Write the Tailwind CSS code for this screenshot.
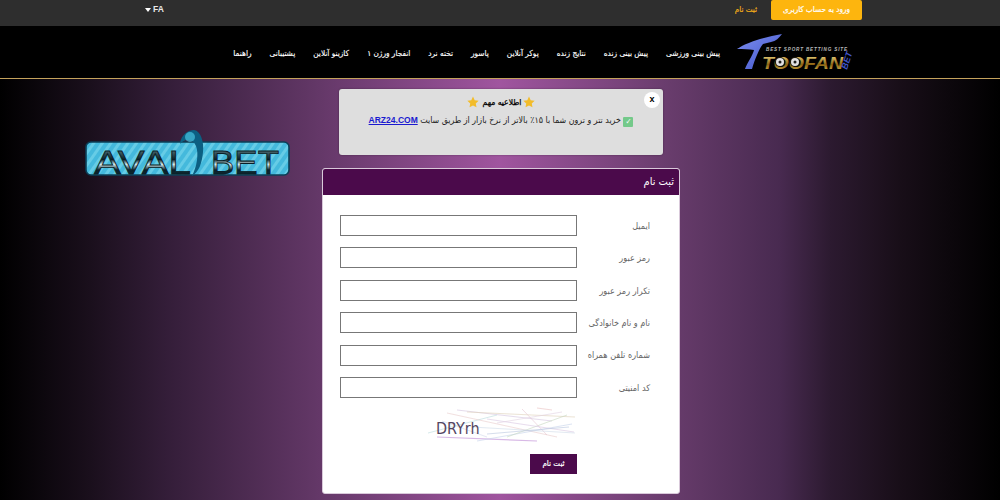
<!doctype html>
<html lang="fa" dir="rtl">
<head>
<meta charset="utf-8">
<script src="https://cdn.jsdelivr.net/npm/@tailwindcss/browser@4"></script>
</head>
<body class="m-0 h-[500px] w-[1000px] overflow-hidden bg-black font-['DejaVu_Sans_Condensed','DejaVu_Sans',sans-serif]">
<div class="flex h-[26px] items-start justify-between bg-[#2e2e2e] pl-[145px] pr-[138px]" dir="ltr">
  <div class="flex h-[19px] items-center gap-[2px] text-[8.5px] font-bold text-[#e8e8e8]"><span class="h-0 w-0 border-x-[3px] border-t-[4px] border-x-transparent border-t-white"></span><span class="font-['Liberation_Sans',sans-serif]">FA</span></div>
  <div class="flex items-center gap-[14px]">
    <span class="text-[8px] text-[#f0ab19] [-webkit-text-stroke:0.2px]">ثبت نام</span>
    <span class="flex h-[20px] w-[91px] items-center justify-center rounded-[2px] bg-[#fdb50e] text-[8px] text-white [-webkit-text-stroke:0.2px]" dir="rtl">ورود به حساب کاربری</span>
  </div>
</div>
<header class="flex h-[53px] items-center border-b border-[#c4a25c] bg-black pr-[145px]">
  <svg class="h-[46px] w-[120px] shrink-0 [direction:ltr]" viewBox="0 -4 120 46">
    <defs>
      <linearGradient id="g" x1="0" y1="0" x2="0" y2="1"><stop offset="0" stop-color="#f6e08a"/><stop offset=".55" stop-color="#8a6414"/><stop offset="1" stop-color="#e2bd58"/></linearGradient>
      <linearGradient id="t" x1="0" y1="0" x2="1" y2="1"><stop offset="0" stop-color="#7d8ff0"/><stop offset="1" stop-color="#3f52c8"/></linearGradient>
    </defs>
    <path d="M2 16 C12 9 30 4 47 1 C44 5 41 8 36 9 L28 11 C24 16 20 26 17 36 L10 36 C12 30 18 22 19 17 C14 16 8 16 2 16Z" fill="url(#t)"/>
    <text x="31" y="18" font-family="Liberation Sans" font-size="4.6" font-weight="700" font-style="italic" fill="#b9b9b9" textLength="81">BEST SPORT BETTING SITE</text>
    <text x="27" y="36" font-family="Liberation Sans" font-size="17" font-weight="900" font-style="italic" fill="url(#g)" textLength="81" lengthAdjust="spacingAndGlyphs">TOOFAN</text>
    <circle cx="45" cy="29" r="5" fill="#1a1408"/><circle cx="60" cy="29" r="5" fill="#1a1408"/>
    <circle cx="45" cy="29" r="4" fill="#e2e2e2"/><circle cx="60" cy="29" r="4" fill="#e2e2e2"/><circle cx="45" cy="29" r="1.5" fill="#222"/><circle cx="60" cy="29" r="1.5" fill="#222"/>
    <text x="0" y="0" transform="translate(112 37) rotate(-72)" font-family="Liberation Sans" font-size="9" font-weight="900" font-style="italic" fill="#3f55c8">BET</text>
  </svg>
  <nav class="mr-[15px] mt-[2px] flex items-center gap-[18px] whitespace-nowrap text-[8.2px] text-white [-webkit-text-stroke:0.15px]">
    <a>پیش بینی ورزشی</a><a>پیش بینی زنده</a><a>نتایج زنده</a><a>پوکر آنلاین</a><a>پاسور</a><a>تخته نرد</a><a>انفجار ورژن ۱</a><a>کازینو آنلاین</a><a>پشتیبانی</a><a>راهنما</a>
  </nav>
</header>
<main class="flex h-[421px] bg-[linear-gradient(to_right,#000_0%,#1a0f1c_9%,#331d38_16.5%,#643868_32%,#a0559f_50%,#683c6c_67%,#482a50_78%,#2c1a30_83%,#180e18_90%,#000_100%)] pr-[320px]" dir="rtl">
  <div class="w-[358px] shrink-0 pt-[10px]">
    <div class="relative mx-auto h-[66px] w-[324px] rounded-[3px] bg-[#dedede] pt-[7px] text-center text-[8.8px] text-[#222] shadow-[0_0_2px_#0006]">
      <span class="absolute right-[3px] top-[3px] flex h-[16px] w-[16px] items-center justify-center rounded-full bg-white font-['Liberation_Sans',sans-serif] text-[9px] font-bold text-black">x</span>
      <p class="flex items-center justify-center gap-[2px] text-[8.5px] text-black [-webkit-text-stroke:0.25px]">
        <svg class="h-[12px] w-[12px]" viewBox="0 0 24 24"><path d="M12 1l3.4 7.3 7.9 1-5.8 5.5 1.5 7.9L12 18.8l-7 3.9 1.5-7.9L.7 9.3l7.9-1z" fill="#f2bc2b"/></svg>
        <span>اطلاعیه مهم</span>
        <svg class="mr-[2px] h-[12px] w-[12px]" viewBox="0 0 24 24"><path d="M12 1l3.4 7.3 7.9 1-5.8 5.5 1.5 7.9L12 18.8l-7 3.9 1.5-7.9L.7 9.3l7.9-1z" fill="#f2bc2b"/></svg>
      </p>
      <p class="mt-[5px]"><span class="inline-block h-[10px] w-[10px] rounded-[1px] bg-[#74c98a] align-[-1px] text-[8px] leading-[10px] text-white">✓</span> خرید تتر و ترون شما با ۱۵٪ بالاتر از نرخ بازار از طریق سایت <a class="font-['Liberation_Sans',sans-serif] text-[8.5px] font-bold text-[#1a1ad0] underline">ARZ24.COM</a></p>
    </div>
    <section class="mt-[13px] h-[326px] overflow-hidden rounded-[3px] border border-[#d9c9da] bg-white">
      <h1 class="flex h-[26px] items-center bg-[#4b0a4b] px-[5px] text-[11px] font-normal text-white">ثبت نام</h1>
      <form class="flex flex-col pt-[20px] text-[9px] text-[#666]">
        <label class="flex h-[21px] items-center justify-between whitespace-nowrap pl-[17px] pr-[29px]"><span class="pt-[2px]">ایمیل</span><span class="h-[21px] w-[237px] shrink-0 border border-[#777] bg-white"></span></label>
        <label class="mt-[11.4px] flex h-[21px] items-center justify-between whitespace-nowrap pl-[17px] pr-[29px]"><span class="pt-[2px]">رمز عبور</span><span class="h-[21px] w-[237px] shrink-0 border border-[#777] bg-white"></span></label>
        <label class="mt-[11.4px] flex h-[21px] items-center justify-between whitespace-nowrap pl-[17px] pr-[29px]"><span class="pt-[2px]">تکرار رمز عبور</span><span class="h-[21px] w-[237px] shrink-0 border border-[#777] bg-white"></span></label>
        <label class="mt-[11.4px] flex h-[21px] items-center justify-between whitespace-nowrap pl-[17px] pr-[29px]"><span class="pt-[2px]">نام و نام خانوادگی</span><span class="h-[21px] w-[237px] shrink-0 border border-[#777] bg-white"></span></label>
        <label class="mt-[11.4px] flex h-[21px] items-center justify-between whitespace-nowrap pl-[17px] pr-[29px]"><span class="pt-[2px]">شماره تلفن همراه</span><span class="h-[21px] w-[237px] shrink-0 border border-[#777] bg-white"></span></label>
        <label class="mt-[11.4px] flex h-[21px] items-center justify-between whitespace-nowrap pl-[17px] pr-[29px]"><span class="pt-[2px]">کد امنیتی</span><span class="h-[21px] w-[237px] shrink-0 border border-[#777] bg-white"></span></label>
        <div class="ml-auto mr-[102px] mt-[9px]">
          <svg class="h-[38px] w-[150px] [direction:ltr]" viewBox="0 0 150 38">
            <g fill="none" stroke-width=".6" opacity=".8">
              <path d="M30 3 L125 14" stroke="#c9b6d6"/><path d="M1 26 L70 8" stroke="#a9d3d6"/><path d="M10 30 L110 34" stroke="#cfa8e0" stroke-width="1.2"/><path d="M20 6 L130 30" stroke="#e4c0c0"/><path d="M50 34 L145 17" stroke="#b7c8e6"/><path d="M40 5 L148 10" stroke="#d6c6a8"/><path d="M80 30 L140 8" stroke="#b9cfb0"/><path d="M15 14 L60 30" stroke="#c8d0e8"/><path d="M95 2 L120 28" stroke="#e0b8c8"/><path d="M60 12 L147 25" stroke="#d0b8dc"/><path d="M45 20 L148 26" stroke="#c4d4e4"/><path d="M70 16 L135 5" stroke="#dcc8dc"/><path d="M110 1 L125 3" stroke="#e4b0b0"/><path d="M60 27 L142 20" stroke="#a8b8d8"/>
            </g>
            <text x="9" y="27" font-family="DejaVu Sans Condensed" font-size="16" fill="#544662">DRYrh</text>
          </svg>
        </div>
        <button type="button" class="ml-auto mr-[102px] mt-[9px] h-[20px] w-[47px] bg-[#4b0a4b] text-[8px] text-white [-webkit-text-stroke:0.2px]">ثبت نام</button>
      </form>
    </section>
  </div>
  <aside class="mr-[32px] pt-[51px]">
    <svg class="h-[56px] w-[206px] [direction:ltr]" viewBox="0 0 206 56">
      <defs>
        <pattern id="s" width="7" height="7" patternUnits="userSpaceOnUse" patternTransform="rotate(35)"><rect width="7" height="7" fill="#44b9dc"/><rect width="3" height="7" fill="#66cce6"/></pattern>
        <linearGradient id="l" x1="0" y1="0" x2="0" y2="1"><stop offset="0" stop-color="#7fa6b0"/><stop offset=".42" stop-color="#0a1e24"/><stop offset=".55" stop-color="#d4eef4"/><stop offset=".7" stop-color="#0a2028"/><stop offset="1" stop-color="#123842"/></linearGradient>
      </defs>
      <rect x="2" y="12" width="203" height="33" rx="5" fill="url(#s)" stroke="#0b3f57" stroke-width="1.6"/>
      <path d="M96 14 C97 4 105 0 110 0 C117 1 120 12 119 22 C118 33 115 42 108 46 C113 36 115 24 112 16 C109 9 101 8 96 14Z" fill="#0c5f82"/>
      <circle cx="106" cy="7" r="5" fill="#49c3df" opacity=".7"/>
      <text x="10" y="44" font-family="Liberation Sans" font-size="33" fill="url(#l)" stroke="#0a1e26" stroke-width=".8" textLength="97" lengthAdjust="spacingAndGlyphs">AVAL</text>
      <text x="127" y="44" font-family="Liberation Sans" font-size="33" fill="url(#l)" stroke="#0a1e26" stroke-width=".8" textLength="68" lengthAdjust="spacingAndGlyphs">BET</text>
    </svg>
  </aside>
</main>
</body>
</html>
